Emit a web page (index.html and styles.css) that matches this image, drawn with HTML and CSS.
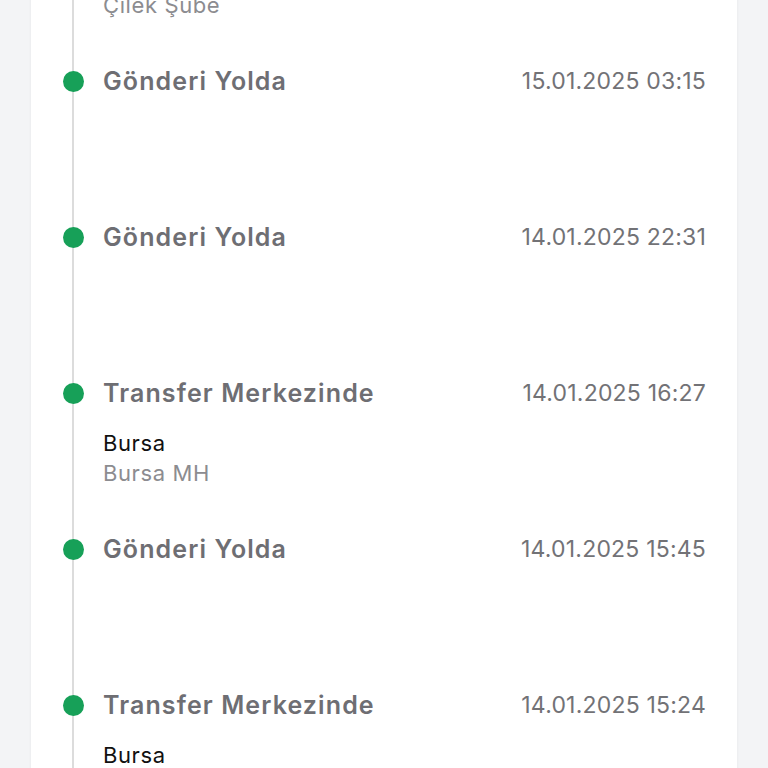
FILE: index.html
```html
<!DOCTYPE html>
<html>
    <head>
        <meta charset="utf-8" />
        <title>Gönderi Takibi</title>
        <link rel="stylesheet" href="styles.css">
    </head>

    <body>
      <div id="sayfa">
        <div id="kart">
          <ul id="hareketler">

            <li class="hareket">
              <span class="nokta"></span>
              <div class="icerik">
                <div class="baslik">
                  <p class="durum">Şubede</p>
                  <p class="tarih">15.01.2025 09:02</p>
                </div>
                <p class="sehir">Mersin</p>
                <p class="sube">Çilek Şube</p>
              </div>
            </li>

            <li class="hareket">
              <span class="nokta"></span>
              <div class="icerik">
                <div class="baslik">
                  <p class="durum">Gönderi Yolda</p>
                  <p class="tarih">15.01.2025 03:15</p>
                </div>
              </div>
            </li>

            <li class="hareket">
              <span class="nokta"></span>
              <div class="icerik">
                <div class="baslik">
                  <p class="durum">Gönderi Yolda</p>
                  <p class="tarih">14.01.2025 22:31</p>
                </div>
              </div>
            </li>

            <li class="hareket">
              <span class="nokta"></span>
              <div class="icerik">
                <div class="baslik">
                  <p class="durum">Transfer Merkezinde</p>
                  <p class="tarih">14.01.2025 16:27</p>
                </div>
                <p class="sehir">Bursa</p>
                <p class="sube">Bursa MH</p>
              </div>
            </li>

            <li class="hareket">
              <span class="nokta"></span>
              <div class="icerik">
                <div class="baslik">
                  <p class="durum">Gönderi Yolda</p>
                  <p class="tarih">14.01.2025 15:45</p>
                </div>
              </div>
            </li>

            <li class="hareket">
              <span class="nokta"></span>
              <div class="icerik">
                <div class="baslik">
                  <p class="durum">Transfer Merkezinde</p>
                  <p class="tarih">14.01.2025 15:24</p>
                </div>
                <p class="sehir">Bursa</p>
                <p class="sube">Bursa MH</p>
              </div>
            </li>

          </ul>
        </div>
      </div>
    </body>
</html>
```

FILE: styles.css
```css
html, body{
    margin: 0;
    padding: 0;
    height: 100%;
    overflow: hidden;
}
body{
    background-color: #f3f4f6;
    font-family: Inter, "Noto Sans", sans-serif;
}
#sayfa{
    padding: 0 31px;
    margin-top: -91px;
}
#kart{
    background-color: #ffffff;
    box-shadow: 0 0 3px rgba(0, 0, 0, 0.06);
}
#hareketler{
    list-style: none;
    margin: 0;
    padding: 0 31px 0 0;
    /* dikey çizgi */
    background: linear-gradient(#dcdcdc, #dcdcdc) no-repeat 41px 0 / 2px 100%;
}
.hareket{
    display: flex;
    align-items: flex-start;
    min-height: 156px;
}
.nokta{
    flex: none;
    width: 21px;
    height: 21px;
    border-radius: 50%;
    background-color: #17a058;
    margin: 6px 19px 0 32px;
}
.icerik{
    flex: 1;
}
.icerik p{
    margin: 0;
}
.baslik{
    display: flex;
    justify-content: space-between;
    align-items: center;
    height: 32px;
}
.durum{
    font-size: 25px;
    font-weight: 600;
    letter-spacing: 1.1px;
    color: #6e6e73;
}
.tarih{
    font-size: 23px;
    letter-spacing: 0.2px;
    color: #727276;
}
.sehir{
    margin-top: 19px !important;
    font-size: 22px;
    letter-spacing: 0.6px;
    line-height: 30px;
    color: #111111;
}
.sube{
    font-size: 22px;
    letter-spacing: 0.6px;
    line-height: 30px;
    color: #8c8c90;
}
```
